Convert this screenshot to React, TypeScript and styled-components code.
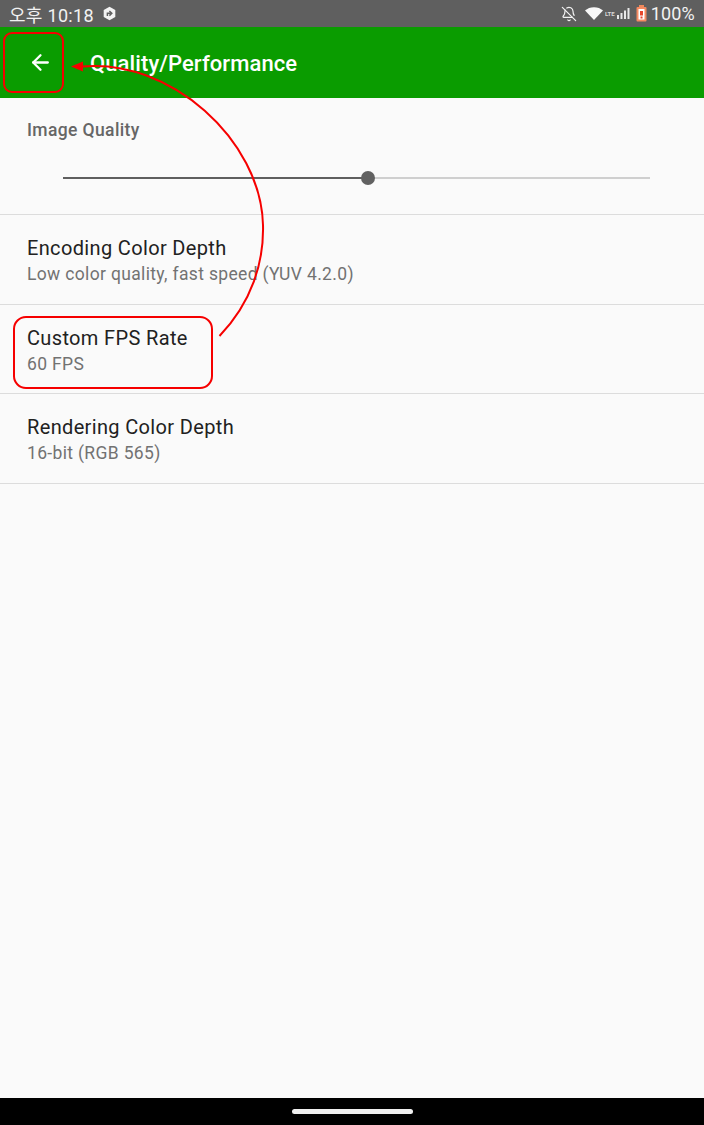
import * as React from 'react';
import styled, { createGlobalStyle } from 'styled-components';
import { ArrowLeft, BellOff } from 'lucide-react';

const GlobalStyle = createGlobalStyle`
  html, body {
    margin: 0;
    padding: 0;
    background: #fafafa;
  }
  * {
    box-sizing: border-box;
  }
`;

const Screen = styled.div`
  position: relative;
  width: 704px;
  height: 1125px;
  display: flex;
  flex-direction: column;
  overflow: hidden;
  background: #fafafa;
  font-family: Roboto, "Noto Sans CJK KR", sans-serif;
`;

const StatusBar = styled.div`
  height: 27px;
  flex: none;
  display: flex;
  align-items: center;
  justify-content: space-between;
  padding: 0 9px 0 9px;
  background: #5f5f5f;
  color: #f2f2f2;
  font-size: 18px;
`;

const StatusGroup = styled.div`
  display: flex;
  align-items: center;
`;

const Clock = styled.span`
  letter-spacing: 0.3px;
  margin-right: 8px;
`;

const Battery = styled.span`
  margin-left: 4px;
  letter-spacing: 0.2px;
`;

const AppBar = styled.header`
  height: 71px;
  flex: none;
  display: flex;
  align-items: center;
  padding-left: 28px;
  background: #0a9c00;
  color: #fff;
`;

const BackIcon = styled(ArrowLeft)`
  flex: none;
  margin-right: 37px;
  margin-top: -1px;
`;

const AppTitle = styled.h1`
  margin: 2px 0 0;
  font-size: 22px;
  font-weight: 500;
  line-height: 1;
  letter-spacing: 0.1px;
`;

const SliderRow = styled.section`
  height: 117px;
  flex: none;
  padding: 22px 54px 0 27px;
  border-bottom: 1px solid #dcdcdc;
`;

const SliderLabel = styled.div`
  font-size: 17.5px;
  font-weight: 500;
  line-height: 21px;
  letter-spacing: 0.38px;
  color: #666;
`;

const Track = styled.div`
  position: relative;
  height: 2px;
  margin: 36px 0 0 36px;
  background: #cfcfcf;
`;

const TrackFill = styled.div`
  height: 2px;
  background: #5f5f5f;
`;

const Thumb = styled.div`
  position: absolute;
  top: -6px;
  width: 14px;
  height: 14px;
  margin-left: -7px;
  border-radius: 50%;
  background: #616161;
`;

const Row = styled.div`
  height: 89.6px;
  flex: none;
  padding-top: 21px;
  padding-left: 27px;
  border-bottom: 1px solid #dcdcdc;
`;

const RowTitle = styled.div`
  font-size: 20px;
  line-height: 24px;
  letter-spacing: 0.35px;
  color: #212121;
`;

const RowSub = styled.div`
  font-size: 17.5px;
  line-height: 23px;
  margin-top: 3px;
  letter-spacing: 0.34px;
  color: #727272;
`;

const Spacer = styled.div`
  flex: 1;
`;

const NavBar = styled.div`
  height: 27px;
  flex: none;
  display: flex;
  justify-content: center;
  padding-top: 11px;
  background: #000;
`;

const NavHandle = styled.div`
  width: 121px;
  height: 5px;
  border-radius: 3px;
  background: #f0f0f0;
`;

// red annotation boxes drawn over the screenshot
const Callout = styled.div<{ $x: number; $y: number; $w: number; $h: number; $r: number }>`
  position: absolute;
  left: ${p => p.$x}px;
  top: ${p => p.$y}px;
  width: ${p => p.$w}px;
  height: ${p => p.$h}px;
  border: 2px solid #f60000;
  border-radius: ${p => p.$r}px;
`;

const ArrowOverlay = styled.svg`
  position: absolute;
  left: 0;
  top: 0;
  pointer-events: none;
`;

const SliderValue = 52;

const App = () => {
  return (
    <Screen>
      <GlobalStyle />
      <StatusBar>
        <StatusGroup>
          <Clock>오후 10:18</Clock>
          <svg width="15" height="15" viewBox="0 0 15 15">
            <path d="M7.5 .8 13.3 4v7l-5.8 3.2L1.7 11V4z" fill="#f4f4f4" />
            <path d="M5.4 10V7.3h3.2M7.4 5l2.4 2.3-2.4 2.3" fill="none" stroke="#5f5f5f" strokeWidth="1.5" />
          </svg>
        </StatusGroup>
        <StatusGroup>
          <BellOff size={16} strokeWidth={1.8} color="#f2f2f2" />
          <svg width="18" height="13" viewBox="0 0 18 13" style={{ marginLeft: 8 }}>
            <path d="M0 3.6C2.4 1.4 5.5.2 9 .2s6.6 1.2 9 3.4L9 13z" fill="#f8f8f8" />
          </svg>
          <svg width="28" height="14" viewBox="0 0 28 14" style={{ marginLeft: 2 }}>
            <text x="0" y="9" fontSize="6" fontWeight="700" fill="#d8d8d8" fontFamily="Roboto, sans-serif">LTE</text>
            <rect x="12" y="8" width="2" height="4" fill="#e8e8e8" />
            <rect x="15.500" y="6" width="2" height="6" fill="#e8e8e8" />
            <rect x="19" y="3.500" width="2" height="8.500" fill="#e8e8e8" />
            <rect x="22.500" y="1" width="2" height="11" fill="#e8e8e8" />
          </svg>
          <svg width="11" height="17" viewBox="0 0 11 17" style={{ marginLeft: 3 }}>
            <rect x="3" y="0" width="5" height="2" fill="#f08a5d" />
            <rect x="0.5" y="2" width="10" height="14.5" rx="1" fill="#f58a62" />
            <rect x="2.5" y="4" width="6" height="10.5" fill="#fff" />
            <rect x="4" y="6" width="3" height="4.5" fill="#e8452a" />
            <rect x="4.5" y="11.5" width="2" height="2" fill="#e8452a" />
          </svg>
          <Battery>100%</Battery>
        </StatusGroup>
      </StatusBar>
      <AppBar>
        <BackIcon size={25} strokeWidth={2.2} />
        <AppTitle>Quality/Performance</AppTitle>
      </AppBar>
      <SliderRow>
        <SliderLabel>Image Quality</SliderLabel>
        <Track>
          <TrackFill style={{ width: `${SliderValue}%` }} />
          <Thumb style={{ left: `${SliderValue}%` }} />
        </Track>
      </SliderRow>
      <Row>
        <RowTitle>Encoding Color Depth</RowTitle>
        <RowSub>Low color quality, fast speed (YUV 4.2.0)</RowSub>
      </Row>
      <Row>
        <RowTitle>Custom FPS Rate</RowTitle>
        <RowSub>60 FPS</RowSub>
      </Row>
      <Row>
        <RowTitle>Rendering Color Depth</RowTitle>
        <RowSub>16-bit (RGB 565)</RowSub>
      </Row>
      <Spacer />
      <NavBar>
        <NavHandle />
      </NavBar>
      <Callout $x={3} $y={32} $w={61} $h={61} $r={9} />
      <Callout $x={13} $y={316} $w={200} $h={73} $r={13} />
      <ArrowOverlay width="704" height="1125" viewBox="0 0 704 1125">
        <path d="M219.500 336C252 302 264 262 263 225C261 140 170 58 82 66.500" fill="none" stroke="#f60000" strokeWidth="2" />
        <path d="M71 66.500 83 61.500V71.500z" fill="#f60000" />
      </ArrowOverlay>
    </Screen>
  );
};

export default App;
